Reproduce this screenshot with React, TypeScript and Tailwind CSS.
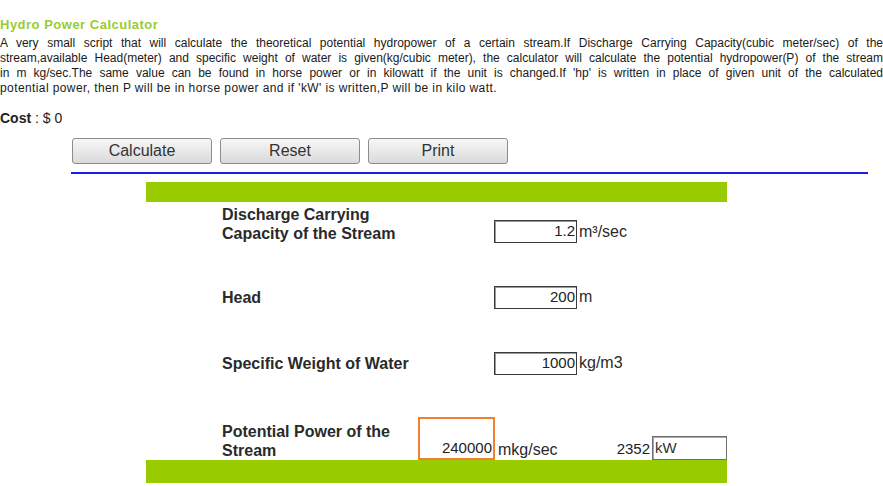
import React from "react";

const description = [
    "A very small script that will calculate the theoretical potential hydropower of a certain stream.If Discharge Carrying Capacity(cubic meter/sec) of the",
    "stream,available Head(meter) and specific weight of water is given(kg/cubic meter), the calculator will calculate the potential hydropower(P) of the stream",
    "in m kg/sec.The same value can be found in horse power or in kilowatt if the unit is changed.If 'hp' is written in place of given unit of the calculated",
];

const ValueBox = ({ value }: { value: string }) => (
    <div className="flex h-[23px] w-[83px] items-center justify-end border border-[#3a3a3a] bg-white pr-[1px] text-[15px] text-[#222] shadow-[inset_1px_1px_0_#9a9a9a]">
        {value}
    </div>
);

const ToolButton = ({ label }: { label: string }) => (
    <button
        type="button"
        className="h-[26px] w-[140px] rounded-[3px] border border-[#8c8c8c] bg-gradient-to-b from-[#f7f7f7] to-[#dadada] text-[16px] text-[#333]"
    >
        {label}
    </button>
);

export default function App() {
    return (
        <div className="h-[486px] w-[883px] overflow-hidden bg-white font-['Liberation_Sans',Arial,sans-serif] text-[#222]">
            {/* intro */}
            <div className="pt-[17px]">
                <div className="text-[13px] font-bold leading-[16px] tracking-[0.5px] text-[#99cc33]">
                    Hydro Power Calculator
                </div>
                <div className="mt-[3px] text-[12px] leading-[15px] text-[#1a1a1a]">
                    {description.map((line, i) => (
                        <div key={i} className="text-justify [text-align-last:justify]">
                            {line}
                        </div>
                    ))}
                    <div className="tracking-[0.4px]">
                        {"potential power, then P will be in horse power and if 'kW' is written,P will be in kilo watt."}
                    </div>
                </div>
                <div className="mt-[15px] text-[14px] leading-[15px] text-[#222]">
                    <span className="font-bold">Cost</span> : $ 0
                </div>
            </div>

            {/* actions */}
            <div className="mt-[12px] flex gap-[8px] pl-[72px]">
                <ToolButton label="Calculate" />
                <ToolButton label="Reset" />
                <ToolButton label="Print" />
            </div>
            <div className="ml-[71px] mt-[8px] h-[2px] w-[797px] bg-[#1c1ce8]" />

            {/* form */}
            <div className="ml-[146px] mt-[8px] w-[581px] text-[16px] text-[#2a2a2a]">
                <div className="h-[20px] bg-[#99cc00]" />

                <div className="mt-[3px] flex items-end pl-[76px]">
                    <div className="w-[272px] font-bold leading-[19px]">
                        Discharge Carrying
                        <br />
                        Capacity of the Stream
                    </div>
                    <ValueBox value="1.2" />
                    <span className="ml-[2px] leading-[23px]">m³/sec</span>
                </div>

                <div className="mt-[42px] flex items-center pl-[76px]">
                    <div className="w-[272px] font-bold leading-[19px]">Head</div>
                    <ValueBox value="200" />
                    <span className="ml-[2px]">m</span>
                </div>

                <div className="mt-[42px] flex items-center pl-[76px]">
                    <div className="w-[272px] font-bold leading-[19px]">
                        Specific Weight of Water
                    </div>
                    <ValueBox value="1000" />
                    <span className="ml-[2px]">kg/m3</span>
                </div>

                <div className="mt-[42px] flex items-end pl-[76px]">
                    <div className="w-[196px] font-bold leading-[19px]">
                        Potential Power of the
                        <br />
                        Stream
                    </div>
                    <div className="flex h-[43px] w-[77px] items-end justify-end border-2 border-[#f08030] pb-[1px] pr-[1px] text-[15px] leading-[18px] text-[#222]">
                        240000
                    </div>
                    <span className="ml-[3px] leading-[20px]">mkg/sec</span>
                    <span className="ml-auto text-[15px] leading-[22px] text-[#222]">2352</span>
                    <div className="ml-[2px] flex h-[24px] w-[75px] items-center border border-[#6e6e6e] bg-white pl-[2px] text-[15px] text-[#333] shadow-[inset_1px_1px_0_#aaa]">
                        kW
                    </div>
                </div>

                <div className="h-[23px] bg-[#99cc00]" />
            </div>
        </div>
    );
}
